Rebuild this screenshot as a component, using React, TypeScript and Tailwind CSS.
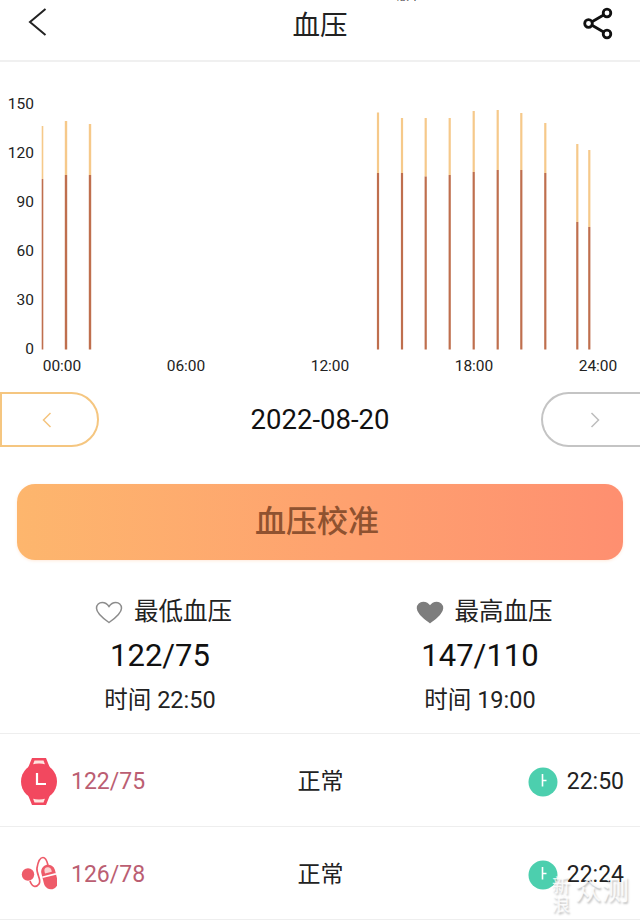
const bars = [
  { x: 42.5, top: 126, mid: 179, w: 1.6 },
  { x: 66, top: 121, mid: 175, w: 2.4 },
  { x: 90, top: 124, mid: 175, w: 2.4 },
  { x: 378, top: 112.5, mid: 173, w: 2.2 },
  { x: 402, top: 118, mid: 173, w: 2.2 },
  { x: 425.7, top: 118, mid: 176.5, w: 2.2 },
  { x: 449.7, top: 118, mid: 175, w: 2.2 },
  { x: 473.7, top: 111, mid: 172, w: 2.2 },
  { x: 497.7, top: 110, mid: 170, w: 2.2 },
  { x: 521.3, top: 113, mid: 170, w: 2.2 },
  { x: 545.3, top: 123, mid: 173, w: 2.2 },
  { x: 577.3, top: 144, mid: 222, w: 2.2 },
  { x: 589.3, top: 150, mid: 227, w: 2.2 },
];
const yLabels = [
  ["150", 103.5],
  ["120", 152.5],
  ["90", 201.5],
  ["60", 250.5],
  ["30", 299.5],
  ["0", 348.5],
] as const;
const xLabels = [
  ["00:00", 62],
  ["06:00", 186],
  ["12:00", 330],
  ["18:00", 474],
  ["24:00", 598],
] as const;

const heart =
  "M14 21.5C5.5 15.5 1.5 11.5 1.5 7.2 1.5 3.8 4.2 1.5 7.2 1.5c2.8 0 5.2 1.6 6.8 4 1.6-2.4 4-4 6.8-4 3 0 5.7 2.3 5.7 5.7 0 4.3-4 8.3-12.5 14.3z";

function Clock() {
  return (
    <svg width="30" height="30" viewBox="0 0 30 30" className="shrink-0">
      <circle cx="15" cy="15" r="14.5" fill="#4ccfae" />
      <path d="M14.5 7v12.5M14.5 13.5h4" stroke="#fff" strokeWidth="1.6" fill="none" />
    </svg>
  );
}

function Watch() {
  return (
    <svg width="36" height="47" viewBox="0 0 36 47" className="shrink-0">
      <path d="M7 10 11 0h14l4 10zM7 37l4 10h14l4-10z" fill="#f2485f" />
      <path d="M12 6.500 13.500 2.500h9l1.500 4zM12 40.500l1.500 4h9l1.500-4z" fill="#ffe3df" />
      <circle cx="18" cy="23.500" r="18" fill="#f2485f" />
      <path d="M16 15v11h9" fill="none" stroke="#fff" strokeWidth="2.200" />
    </svg>
  );
}

function Pill() {
  return (
    <svg width="36" height="37" viewBox="0 0 36 37" className="shrink-0">
      <circle cx="7" cy="18.500" r="6.200" fill="#ee5b69" />
      <path
        d="M9 25C11 31 15 32 18 28 21 24 15 18 16 12 17 6 19 1.500 22 1.500 25 1.500 26 5 27 9"
        fill="none"
        stroke="#ee5b69"
        strokeWidth="1.700"
      />
      <g transform="rotate(-14 28.500 21)">
        <rect x="21.500" y="8.500" width="14" height="25" rx="7" fill="#ee5b69" />
        <path d="M21.500 19.500h14" stroke="#fff" strokeWidth="1.600" />
        <path d="M25 16.500h7v-2a3.500 3.500 0 0 0-7 0z" fill="#fbd3d3" />
      </g>
    </svg>
  );
}

function Row({ icon, value, time }: { icon: React.ReactNode; value: string; time: string }) {
  return (
    <div className="relative flex h-[93px] items-center border-b border-[#eeeeee] px-[16px] pt-[3px]">
      <div className="ml-[5px] flex flex-1 items-center gap-[14px]">
        {icon}
        <span className="mt-[2px] text-[23px] text-[#bb5e72]">{value}</span>
      </div>
      <span className="mr-[4px] mt-[2px] text-[23px] text-[#222222]">正常</span>
      <div className="flex flex-1 items-center justify-end gap-[9px]">
        <Clock />
        <span className="mt-[2px] text-[23px] text-[#222222]">{time}</span>
      </div>
    </div>
  );
}

function Stat({
  filled,
  title,
  value,
  time,
  shift,
}: {
  filled: boolean;
  title: string;
  value: string;
  time: string;
  shift: string;
}) {
  return (
    <div className="flex flex-col items-center">
      <div className={`flex h-[28px] items-center gap-[11px] ${shift}`}>
        <svg width="28" height="23" viewBox="0 0 28 23">
          <path d={heart} fill={filled ? "#7d7d7d" : "#fff"} stroke={filled ? "#7d7d7d" : "#8c8c8c"} strokeWidth="1.500" />
        </svg>
        <span className="text-[24.500px] leading-[28px] text-[#222222]">{title}</span>
      </div>
      <div className="mt-[11px] h-[38px] text-[31px] leading-[38px] text-[#111111]">{value}</div>
      <div className="mt-[11px] text-[23.500px] leading-[28px] text-[#222222]">{time}</div>
    </div>
  );
}

export default function App() {
  return (
    <div className="relative h-[923px] w-[640px] overflow-hidden bg-white font-[Roboto,'Noto_Sans_CJK_SC',sans-serif]">
      <span className="absolute left-[397px] top-[-10px] text-[12px] leading-[12px] text-[#333333]">版本</span>

      <header className="flex h-[62px] items-center border-b-2 border-[#f0f0f0] px-[27px]">
        <div className="flex flex-1 items-center">
          <svg width="20" height="28" viewBox="0 0 20 28" className="mb-[16px]">
            <path d="M18.500 1 3 14l15.500 13" fill="none" stroke="#222222" strokeWidth="2" />
          </svg>
        </div>
        <span className="mb-[8px] text-[27.500px] leading-none text-[#222222]">血压</span>
        <div className="flex flex-1 items-center justify-end">
          <svg width="30" height="33" viewBox="0 0 30 33" className="mb-[14px]">
            <path d="M24 6 6 16.500 24 27" fill="none" stroke="#111111" strokeWidth="2.800" />
            <circle cx="24" cy="6" r="3.800" fill="#fff" stroke="#111111" strokeWidth="2.800" />
            <circle cx="5.500" cy="16.500" r="3.800" fill="#fff" stroke="#111111" strokeWidth="2.800" />
            <circle cx="24" cy="27" r="3.800" fill="#fff" stroke="#111111" strokeWidth="2.800" />
          </svg>
        </div>
      </header>

      <svg width="640" height="330" viewBox="0 62 640 330" className="block">
        {yLabels.map(([t, y]) => (
          <text key={t} x="34" y={y + 5.500} textAnchor="end" fontSize="15.500" fill="#222222" fontFamily="Roboto">
            {t}
          </text>
        ))}
        {xLabels.map(([t, x]) => (
          <text key={t} x={x} y="370.500" textAnchor="middle" fontSize="15.500" fill="#222222" fontFamily="Roboto">
            {t}
          </text>
        ))}
        {bars.map((b) => (
          <g key={b.x}>
            <rect x={b.x - b.w / 2} y={b.top} width={b.w} height={b.mid - b.top} fill="#f6c98a" />
            <rect x={b.x - b.w / 2} y={b.mid} width={b.w} height={349.500 - b.mid} fill="#bf6f4e" />
          </g>
        ))}
      </svg>

      <div className="flex h-[55px] items-center justify-between">
        <div className="flex h-[55px] w-[99px] items-center justify-center rounded-r-[27.500px] border-2 border-[#f5c680] pr-[6px]">
          <svg width="10" height="16" viewBox="0 0 10 16">
            <path d="M8.500 1 1.500 8l7 7" fill="none" stroke="#f4c47e" strokeWidth="1.500" />
          </svg>
        </div>
        <span className="text-[27.500px] leading-none text-[#111111]">2022-08-20</span>
        <div className="flex h-[55px] w-[99px] items-center justify-center rounded-l-[27.500px] border-2 border-r-0 border-[#c4c4c4] pl-[6px]">
          <svg width="10" height="16" viewBox="0 0 10 16">
            <path d="m1.500 1 7 7-7 7" fill="none" stroke="#bdbdbd" strokeWidth="1.500" />
          </svg>
        </div>
      </div>

      <div className="mx-[17px] mt-[37px] flex h-[76px] items-center justify-center rounded-[18px] bg-gradient-to-r from-[#fdb66d] to-[#fe8f70] pr-[6px] text-[31px] font-medium text-[#8f5230] shadow-[0_1px_3px_rgba(255,170,110,0.25)]">
        血压校准
      </div>

      <div className="mt-[38px] grid h-[136px] grid-cols-2 border-b border-[#eeeeee]">
        <Stat filled={false} title="最低血压" value="122/75" time="时间 22:50" shift="ml-[7px]" />
        <Stat filled title="最高血压" value="147/110" time="时间 19:00" shift="ml-[8px]" />
      </div>

      <Row icon={<Watch />} value="122/75" time="22:50" />
      <Row icon={<Pill />} value="126/78" time="22:24" />

      <div className="absolute left-[552px] top-[876px] flex items-start gap-[5px] text-white/80 [text-shadow:1px_2px_2px_rgba(0,0,0,0.25)]">
        <span className="flex flex-col text-[18px] leading-[19px]">
          <span>新</span>
          <span>浪</span>
        </span>
        <span className="text-[27px] leading-[30px]">众测</span>
      </div>
    </div>
  );
}
